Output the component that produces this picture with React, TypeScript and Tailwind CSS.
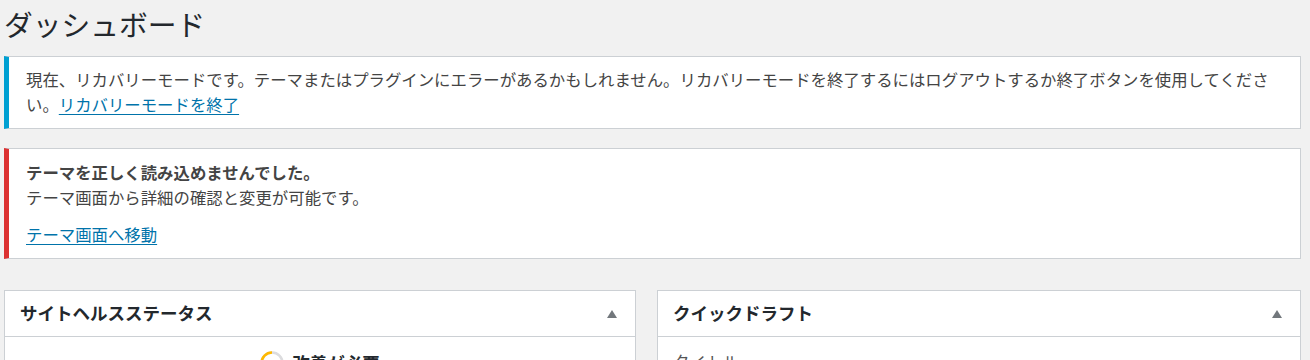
const font = "font-['Noto_Sans_CJK_JP','Noto_Sans',sans-serif]";

const Toggle = () => (
  <svg width="10" height="8" viewBox="0 0 10 8" className="shrink-0">
    <polygon points="5,0 10,8 0,8" fill="#72777c" />
  </svg>
);

const HealthRing = () => (
  <svg width="24" height="24" viewBox="0 0 24 24" className="shrink-0">
    <circle cx="12" cy="12" r="10.5" fill="none" stroke="#dcdcde" strokeWidth="2.5" />
    <path d="M 1.5 12 A 10.5 10.5 0 0 1 12 1.5" fill="none" stroke="#ffb900" strokeWidth="2.5" />
  </svg>
);

export default function App() {
  return (
    <div className={`min-h-screen bg-[#f1f1f1] pl-[4px] pr-[9px] text-[#444] ${font}`}>
      {/* Page title */}
      <h1 className="pt-[6px] text-[28.75px] leading-[36px] font-normal text-[#23282d]">
        ダッシュボード
      </h1>

      {/* Recovery mode notice */}
      <div className="mt-[14px] border border-[#ccd0d4] border-l-[5px] border-l-[#00a0d2] bg-white pl-[17px] pr-[17px] pt-[10px] pb-[11px] text-[16.4px] leading-[25px]">
        <p>
          現在、リカバリーモードです。テーマまたはプラグインにエラーがあるかもしれません。リカバリーモードを終了するにはログアウトするか終了ボタンを使用してください。
          <a href="#" className="text-[#0073aa] underline underline-offset-[3px]">
            リカバリーモードを終了
          </a>
        </p>
      </div>

      {/* Theme error notice */}
      <div className="mt-[19px] border border-[#ccd0d4] border-l-[5px] border-l-[#dc3232] bg-white pl-[17px] pr-[17px] pt-[11px] pb-[11px] text-[16.4px] leading-[25px]">
        <p>
          <strong className="font-bold text-[#444]">テーマを正しく読み込めませんでした。</strong>
          <br />
          テーマ画面から詳細の確認と変更が可能です。
        </p>
        <p className="mt-[12px]">
          <a href="#" className="text-[#0073aa] underline underline-offset-[3px]">
            テーマ画面へ移動
          </a>
        </p>
      </div>

      {/* Widgets */}
      <div className="mt-[31px] grid grid-cols-[632px_1fr] gap-[21px]">
        <section className="border border-[#ccd0d4] bg-white">
          <div className="flex h-[46px] items-center justify-between border-b border-[#ccd0d4] pl-[15px] pr-[18px]">
            <h2 className="text-[17.5px] font-bold text-[#23282d]">サイトヘルスステータス</h2>
            <Toggle />
          </div>
          <div className="flex items-center justify-center gap-[8px] pt-[13px] pb-[20px]">
            <HealthRing />
            <span className="text-[17.5px] font-semibold text-[#23282d]">改善が必要</span>
          </div>
        </section>

        <section className="border border-[#ccd0d4] bg-white">
          <div className="flex h-[46px] items-center justify-between border-b border-[#ccd0d4] pl-[15px] pr-[18px]">
            <h2 className="text-[17.5px] font-bold text-[#23282d]">クイックドラフト</h2>
            <Toggle />
          </div>
          <div className="px-[15px] pt-[13px] pb-[20px]">
            <label className="text-[16.5px] leading-[25px] text-[#555]">タイトル</label>
          </div>
        </section>
      </div>
    </div>
  );
}
